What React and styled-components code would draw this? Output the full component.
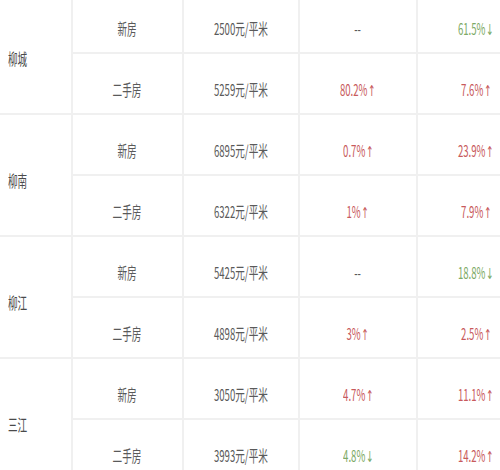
import React from 'react';
import styled, { createGlobalStyle } from 'styled-components';

const GlobalStyle = createGlobalStyle`
html, body {
margin: 0;
padding: 0;
background: #ffffff;
}
body {
font-family: "Noto Sans CJK SC", "Noto Sans", sans-serif;
}
`

const Viewport = styled.div`
width: 500px;
height: 470px;
overflow: hidden;
background: #ffffff;
`

const Table = styled.table`
border-collapse: collapse;
table-layout: fixed;
width: 535px;
margin-top: -9px;
`

const Cell = styled.td`
height: 61px;
padding: 10px 0 0 0;
border: 2px solid #f0f0f0;
text-align: ${({align})=>align || 'center'};
vertical-align: middle;
box-sizing: border-box;
&:first-child {
border-left: none;
}
`

const Label = styled.span`
display: inline-block;
font-size: 16px;
line-height: 20px;
white-space: nowrap;
color: ${({tone})=>{
    if(tone === 'up') return '#c85a5c'
    if(tone === 'down') return '#7daa66'
    return '#5a5a5a'
}};
transform: scaleX(0.6);
transform-origin: ${({origin})=>origin || 'center'};
`

const CityLabel = styled(Label)`
margin-left: 8px;
color: #4a4a4a;
`

const Arrow = styled.span`
font-family: "DejaVu Sans", sans-serif;
font-size: 15px;
margin-left: 1px;
`

const data = [
    {
        city: '柳城',
        rows: [
            { type: '新房', price: '2500元/平米', mom: '--', yoy: '61.5%', yoyDir: 'down' },
            { type: '二手房', price: '5259元/平米', mom: '80.2%', momDir: 'up', yoy: '7.6%', yoyDir: 'up' },
        ]
    },
    {
        city: '柳南',
        rows: [
            { type: '新房', price: '6895元/平米', mom: '0.7%', momDir: 'up', yoy: '23.9%', yoyDir: 'up' },
            { type: '二手房', price: '6322元/平米', mom: '1%', momDir: 'up', yoy: '7.9%', yoyDir: 'up' },
        ]
    },
    {
        city: '柳江',
        rows: [
            { type: '新房', price: '5425元/平米', mom: '--', yoy: '18.8%', yoyDir: 'down' },
            { type: '二手房', price: '4898元/平米', mom: '3%', momDir: 'up', yoy: '2.5%', yoyDir: 'up' },
        ]
    },
    {
        city: '三江',
        rows: [
            { type: '新房', price: '3050元/平米', mom: '4.7%', momDir: 'up', yoy: '11.1%', yoyDir: 'up' },
            { type: '二手房', price: '3993元/平米', mom: '4.8%', momDir: 'down', yoy: '14.2%', yoyDir: 'up' },
        ]
    },
]

const Change = ({value,dir}) => {
    if(!dir){
        return <Label>{value}</Label>
    }
    return (
        <Label tone={dir}>
            {value}<Arrow>{dir === 'up' ? '↑' : '↓'}</Arrow>
        </Label>
    )
}

export default function App() {
    return (
        <>
            <GlobalStyle />
            <Viewport>
                <Table>
                    <colgroup>
                        <col style={{width:72}} />
                        <col style={{width:111}} />
                        <col style={{width:116}} />
                        <col style={{width:118}} />
                        <col style={{width:118}} />
                    </colgroup>
                    <tbody>
                        {
                            data.map((group)=>group.rows.map((row,i)=>(
                                <tr key={group.city + row.type}>
                                    {
                                        i === 0 &&
                                        <Cell rowSpan={group.rows.length} align="left">
                                            <CityLabel origin="left">{group.city}</CityLabel>
                                        </Cell>
                                    }
                                    <Cell><Label>{row.type}</Label></Cell>
                                    <Cell><Label>{row.price}</Label></Cell>
                                    <Cell><Change value={row.mom} dir={row.momDir} /></Cell>
                                    <Cell><Change value={row.yoy} dir={row.yoyDir} /></Cell>
                                </tr>
                            )))
                        }
                    </tbody>
                </Table>
            </Viewport>
        </>
    )
}
